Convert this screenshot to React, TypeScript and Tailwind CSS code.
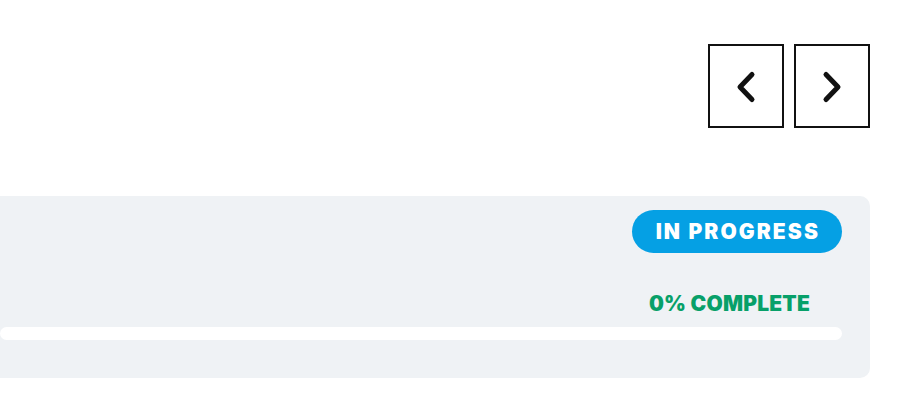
import React from "react"

function Chevron({ dir }: { dir: "left" | "right" }) {
  return (
    <svg width="22" height="34" viewBox="0 0 22 34" fill="none">
      <path
        d={dir === "left" ? "M17 4.5 L5 17 L17 29.5" : "M5 4.5 L17 17 L5 29.5"}
        stroke="#111"
        strokeWidth="5"
        strokeLinecap="round"
        strokeLinejoin="round"
      />
    </svg>
  )
}

export default function App() {
  return (
    <div
      className="w-[920px] h-[400px] bg-white pt-[44px] pr-[50px]"
      style={{ fontFamily: "Inter, 'Liberation Sans', sans-serif" }}
    >
      {/* Pager */}
      <div className="flex justify-end gap-[10px]">
        <button
          className="w-[76px] h-[84px] border-2 border-[#111] flex items-center justify-center pt-[2px]"
          aria-label="Previous"
        >
          <Chevron dir="left" />
        </button>
        <button
          className="w-[76px] h-[84px] border-2 border-[#111] flex items-center justify-center pt-[2px]"
          aria-label="Next"
        >
          <Chevron dir="right" />
        </button>
      </div>

      {/* Status panel */}
      <div className="mt-[68px] h-[182px] bg-[#eff2f5] rounded-r-[10px] pt-[14px] pr-[28px] flex flex-col items-end">
        <span className="h-[43px] pl-[24px] pr-[22px] rounded-full bg-[#05a0e4] text-white text-[21px] font-black tracking-[2.1px] flex items-center">
          IN PROGRESS
        </span>
        <span className="mt-[38px] mr-[32px] text-[#07a069] text-[21px] font-black tracking-[0.2px] leading-[25px]">
          0% COMPLETE
        </span>
        <div className="mt-[11px] w-full h-[13px] bg-white rounded-full" />
      </div>
    </div>
  )
}
